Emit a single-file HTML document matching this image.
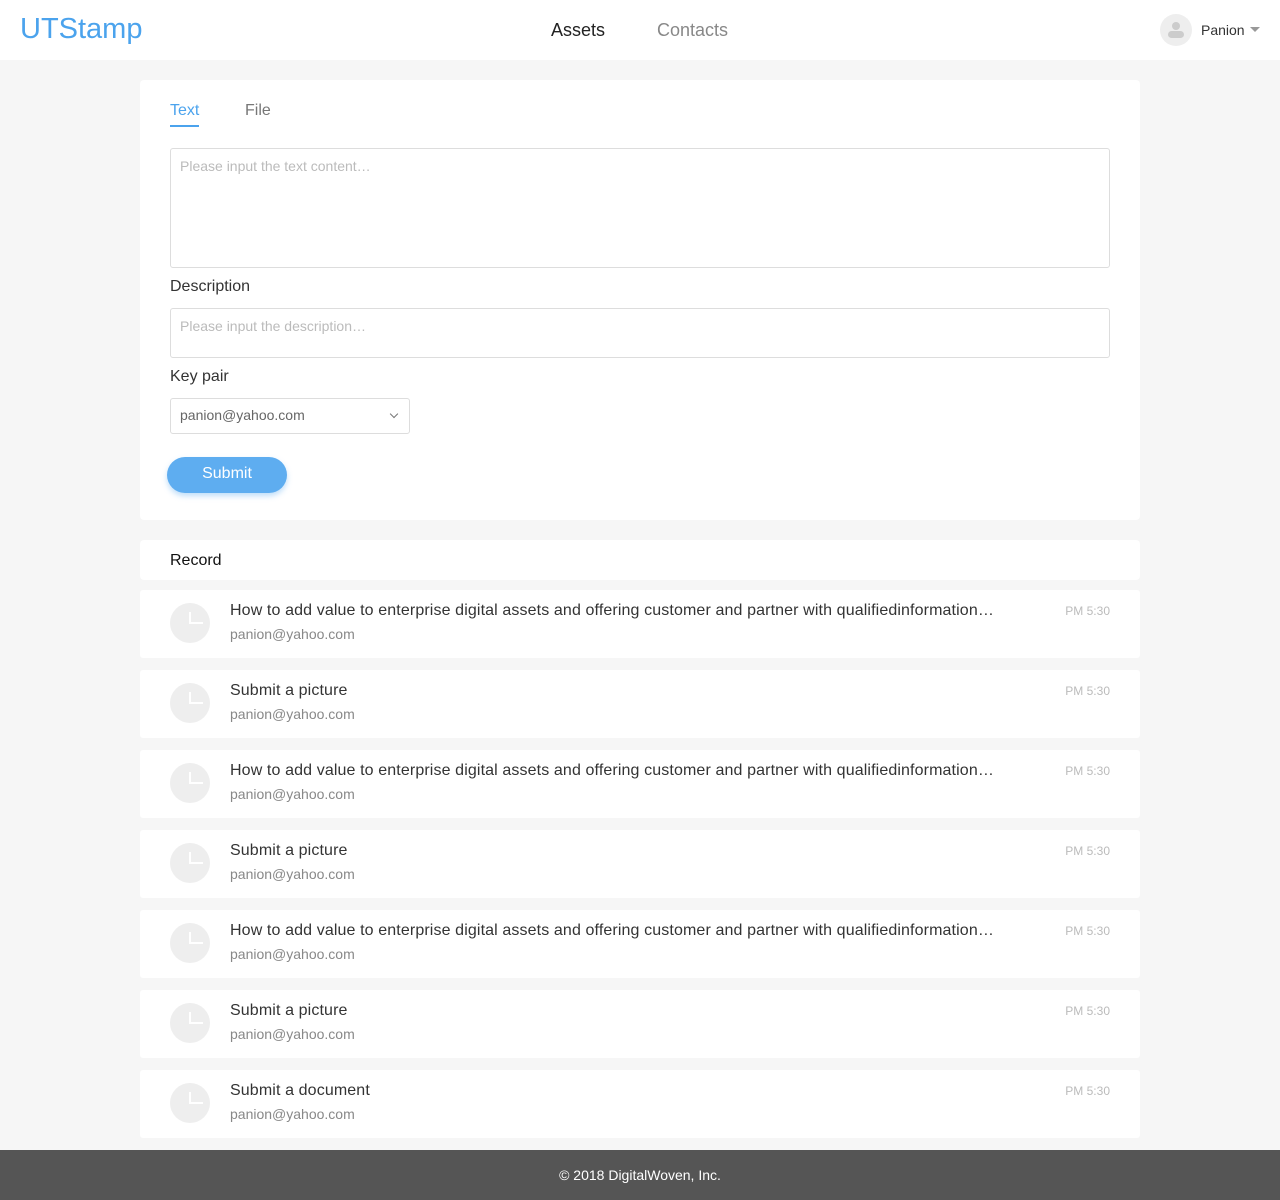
<!DOCTYPE html>
<html><head><style>
*{margin:0;padding:0;box-sizing:border-box}
body{width:1280px;height:1200px;background:#f6f6f6;font-family:"Liberation Sans",Arial,sans-serif;position:relative;overflow:hidden}
.hdr{position:absolute;top:0;left:0;width:1280px;height:60px;background:#fff}
.logo{position:absolute;left:20px;top:13px;font-size:29px;color:#4ba3ed}
.nav{position:absolute;top:20px;font-size:18px}
.card{position:absolute;left:140px;width:1000px;background:#fff;border-radius:4px}
.input{position:absolute;left:30px;width:940px;border:1px solid #ddd;border-radius:3px;font-size:14px;color:#bbb;padding:9px 9px}
.lbl{position:absolute;left:30px;font-size:16px;color:#333}
.item{position:absolute;left:140px;width:1000px;height:68px;background:#fff;border-radius:3px}
.clk{position:absolute;left:30px;top:13px;width:40px;height:40px;border-radius:50%;background:#eee}
.clk:before{content:"";position:absolute;left:19px;top:9px;width:2px;height:12px;background:#fff}
.clk:after{content:"";position:absolute;left:19px;top:19px;width:14px;height:2px;background:#fff}
.t{position:absolute;left:90px;top:12px;font-size:16px;color:#333;letter-spacing:0.12px}
.e{position:absolute;left:90px;top:36px;font-size:14px;color:#888}
.tm{position:absolute;right:30px;top:14px;font-size:12px;color:#bbb}
</style></head><body>
<div class="hdr">
<div class="logo">UTStamp</div>
<div class="nav" style="left:551px;color:#222">Assets</div>
<div class="nav" style="left:657px;color:#888">Contacts</div>
<div style="position:absolute;left:1160px;top:14px;width:32px;height:32px;border-radius:50%;background:#eee;overflow:hidden"><div style="position:absolute;left:12px;top:8px;width:8px;height:8px;border-radius:50%;background:#ccc"></div><div style="position:absolute;left:8px;top:17px;width:16px;height:7px;border-radius:4px;background:#ccc"></div></div>
<div style="position:absolute;left:1201px;top:22px;font-size:14px;color:#333">Panion</div>
<div style="position:absolute;left:1250px;top:27px;border-left:5px solid transparent;border-right:5px solid transparent;border-top:5px solid #999"></div>
</div>
<div class="card" style="top:80px;height:440px">
<div style="position:absolute;left:30px;top:22px;font-size:16px;color:#4ba3ed">Text</div>
<div style="position:absolute;left:30px;top:45px;width:29px;height:2px;background:#4ba3ed"></div>
<div style="position:absolute;left:105px;top:22px;font-size:16px;color:#777">File</div>
<div class="input" style="top:68px;height:120px">Please input the text content…</div>
<div class="lbl" style="top:198px">Description</div>
<div class="input" style="top:228px;height:50px">Please input the description…</div>
<div class="lbl" style="top:288px">Key pair</div>
<div class="input" style="top:318px;height:36px;width:240px;color:#666;padding-top:8px">panion@yahoo.com<span style="position:absolute;right:12px;top:12px;width:6px;height:6px;border-right:1.5px solid #777;border-bottom:1.5px solid #777;transform:rotate(45deg)"></span></div>
<div style="position:absolute;left:27px;top:377px;width:120px;height:36px;border-radius:18px;background:#5eadf0;color:#fff;font-size:16px;text-align:center;line-height:34px;box-shadow:0 3px 6px rgba(94,173,240,.4)">Submit</div>
</div>
<div class="card" style="top:540px;height:40px"><div style="position:absolute;left:30px;top:12px;font-size:16px;color:#111">Record</div></div>

<div class="item" style="top:590px"><div class="clk"></div><div class="t">How to add value to enterprise digital assets and offering customer and partner with qualifiedinformation…</div><div class="e">panion@yahoo.com</div><div class="tm">PM 5:30</div></div>
<div class="item" style="top:670px"><div class="clk"></div><div class="t">Submit a picture</div><div class="e">panion@yahoo.com</div><div class="tm">PM 5:30</div></div>
<div class="item" style="top:750px"><div class="clk"></div><div class="t">How to add value to enterprise digital assets and offering customer and partner with qualifiedinformation…</div><div class="e">panion@yahoo.com</div><div class="tm">PM 5:30</div></div>
<div class="item" style="top:830px"><div class="clk"></div><div class="t">Submit a picture</div><div class="e">panion@yahoo.com</div><div class="tm">PM 5:30</div></div>
<div class="item" style="top:910px"><div class="clk"></div><div class="t">How to add value to enterprise digital assets and offering customer and partner with qualifiedinformation…</div><div class="e">panion@yahoo.com</div><div class="tm">PM 5:30</div></div>
<div class="item" style="top:990px"><div class="clk"></div><div class="t">Submit a picture</div><div class="e">panion@yahoo.com</div><div class="tm">PM 5:30</div></div>
<div class="item" style="top:1070px"><div class="clk"></div><div class="t">Submit a document</div><div class="e">panion@yahoo.com</div><div class="tm">PM 5:30</div></div>

<div style="position:absolute;left:0;top:1150px;width:1280px;height:50px;background:#555;color:#fff;font-size:14px;text-align:center;line-height:50px">© 2018 DigitalWoven, Inc.</div>
</body></html>
